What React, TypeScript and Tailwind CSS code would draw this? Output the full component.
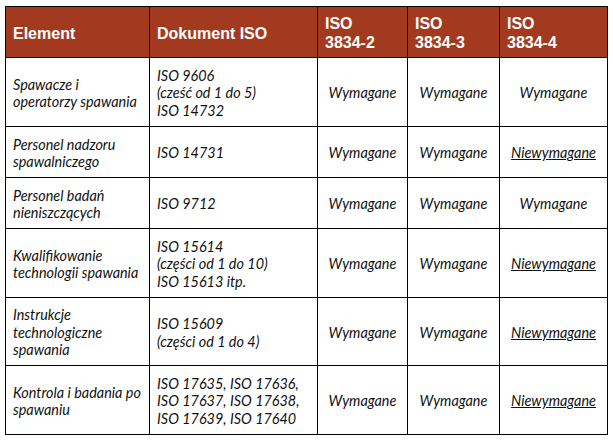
import React from "react";

type Row = {
  el: string[];
  doc: string[];
  h: string;
  c4: "W" | "N";
};

const rows: Row[] = [
  { el: ["Spawacze i", "operatorzy spawania"], doc: ["ISO 9606", "(cześć od 1 do 5)", "ISO 14732"], h: "h-[69px]", c4: "W" },
  { el: ["Personel nadzoru", "spawalniczego"], doc: ["ISO 14731"], h: "h-[51px]", c4: "N" },
  { el: ["Personel badań", "nieniszczących"], doc: ["ISO 9712"], h: "h-[51px]", c4: "W" },
  { el: ["Kwalifikowanie", "technologii spawania"], doc: ["ISO 15614", "(części od 1 do 10)", "ISO 15613 itp."], h: "h-[69px]", c4: "N" },
  { el: ["Instrukcje", "technologiczne", "spawania"], doc: ["ISO 15609", "(części od 1 do 4)"], h: "h-[68px]", c4: "N" },
  { el: ["Kontrola i badania po", "spawaniu"], doc: ["ISO 17635, ISO 17636,", "ISO 17637, ISO 17638,", "ISO 17639, ISO 17640"], h: "h-[69px]", c4: "N" },
];

const body = "font-['Lato',sans-serif] italic text-[14.4px] leading-[17.5px] text-[#111]";

export default function App() {
  return (
    <div className="w-[613px] h-[442px] bg-white pt-[6px] pl-[5px]">
      <table className="table-fixed border-collapse w-[602px]">
        <colgroup>
          <col className="w-[144px]" />
          <col className="w-[168px]" />
          <col className="w-[90px]" />
          <col className="w-[92px]" />
          <col className="w-[108px]" />
        </colgroup>
        <thead>
          <tr className="h-[51px] bg-[#a33a1f] text-white font-['Liberation_Sans',Arial,sans-serif] font-bold text-[16px] leading-[19px]">
            <th className="border border-black text-left align-middle pl-[7px] pt-[2px]">Element</th>
            <th className="border border-black text-left align-middle pl-[7px] pt-[2px]">Dokument ISO</th>
            <th className="border border-black text-left align-middle pl-[7px] pt-[1px]">ISO<br />3834-2</th>
            <th className="border border-black text-left align-middle pl-[7px] pt-[1px]">ISO<br />3834-3</th>
            <th className="border border-black text-left align-middle pl-[7px] pt-[1px]">ISO<br />3834-4</th>
          </tr>
        </thead>
        <tbody className={body}>
          {rows.map((r, i) => (
            <tr key={i} className={r.h}>
              <td className="border border-black align-middle pl-[7px] pt-[2px]">
                {r.el.map((t, j) => (
                  <div key={j}>{t}</div>
                ))}
              </td>
              <td className="border border-black align-middle pl-[7px] pt-[2px]">
                {r.doc.map((t, j) => (
                  <div key={j}>{t}</div>
                ))}
              </td>
              <td className="border border-black align-middle text-center pt-[2px]">Wymagane</td>
              <td className="border border-black align-middle text-center pt-[2px]">Wymagane</td>
              <td className="border border-black align-middle text-center pt-[2px]">
                {r.c4 === "W" ? "Wymagane" : <span className="underline">Niewymagane</span>}
              </td>
            </tr>
          ))}
        </tbody>
      </table>
    </div>
  );
}
